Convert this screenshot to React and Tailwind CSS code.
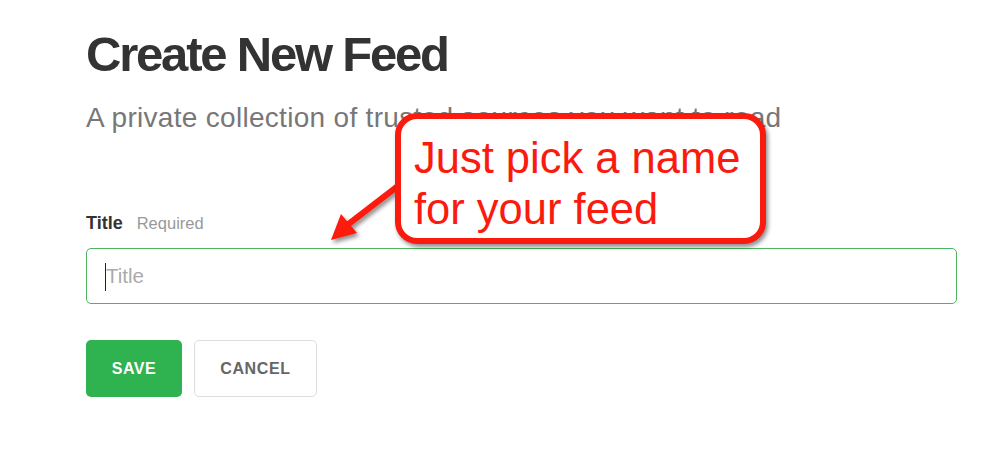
import { useState } from 'react'

const FONT = { fontFamily: '"Liberation Sans", Arial, Helvetica, sans-serif' }

function Callout() {
  return (
    <>
      <svg
        className="absolute left-0 top-0 pointer-events-none"
        width="1000"
        height="472"
        viewBox="0 0 1000 472"
      >
        <defs>
          <filter id="shadow" x="-20%" y="-20%" width="140%" height="140%">
            <feDropShadow dx="2" dy="3" stdDeviation="2" floodColor="#000" floodOpacity="0.45" />
          </filter>
        </defs>
        <g filter="url(#shadow)">
          <line x1="398" y1="186" x2="346" y2="226" stroke="#fb1a0e" strokeWidth="6" />
          <polygon points="331,240 341,214 357,233" fill="#fb1a0e" />
        </g>
      </svg>
      <div
        className="absolute left-[395px] top-[113px] w-[371px] h-[131px] rounded-[22px] border-[6px] border-[#fb1a0e] bg-white shadow-[2px_3px_4px_rgba(0,0,0,0.45)] pl-[13px] pt-[14px]"
      >
        <p className="text-[43.5px] leading-[51px] text-[#fb1a0e] whitespace-nowrap" style={FONT}>
          Just pick a name
          <br />
          for your feed
        </p>
      </div>
    </>
  )
}

export default function App() {
  const [title, setTitle] = useState('')

  return (
    <div className="relative w-[1000px] h-[472px] bg-white overflow-hidden" style={FONT}>
      <div className="pl-[86px] pr-[43px] pt-[26px]">
        <h1 className="text-[49px] leading-[56px] font-bold tracking-[-0.045em] text-[#333333]">
          Create New Feed
        </h1>
        <p className="mt-[19px] text-[28px] leading-[33px] tracking-[0.3px] text-[#777777] whitespace-nowrap">
          A private collection of trusted sources you want to read
        </p>

        <div className="mt-[76px] flex items-baseline gap-[14px]">
          <span className="text-[18px] font-bold text-[#333333]">Title</span>
          <span className="text-[16.5px] text-[#999999]">Required</span>
        </div>

        <div className="mt-[11px] relative h-[56px] rounded-[5px] border border-[#4db560] flex items-center">
          <span className="absolute left-[18px] top-[14px] w-px h-[28px] bg-[#222222]" />
          <input
            value={title}
            onChange={e => setTitle(e.target.value)}
            placeholder="Title"
            className="w-full h-full bg-transparent pl-[19px] text-[20.5px] text-[#333333] placeholder:text-[#aaaaaa] outline-none"
            style={FONT}
          />
        </div>

        <div className="mt-[36px] flex gap-[12px]">
          <button className="w-[96px] h-[57px] rounded-[5px] bg-[#2fb250] text-white text-[16px] font-bold tracking-[0.03em]">
            SAVE
          </button>
          <button className="w-[123px] h-[57px] rounded-[5px] border border-[#dddddd] bg-white text-[#666666] text-[16px] font-bold tracking-[0.04em]">
            CANCEL
          </button>
        </div>
      </div>

      <Callout />
    </div>
  )
}
